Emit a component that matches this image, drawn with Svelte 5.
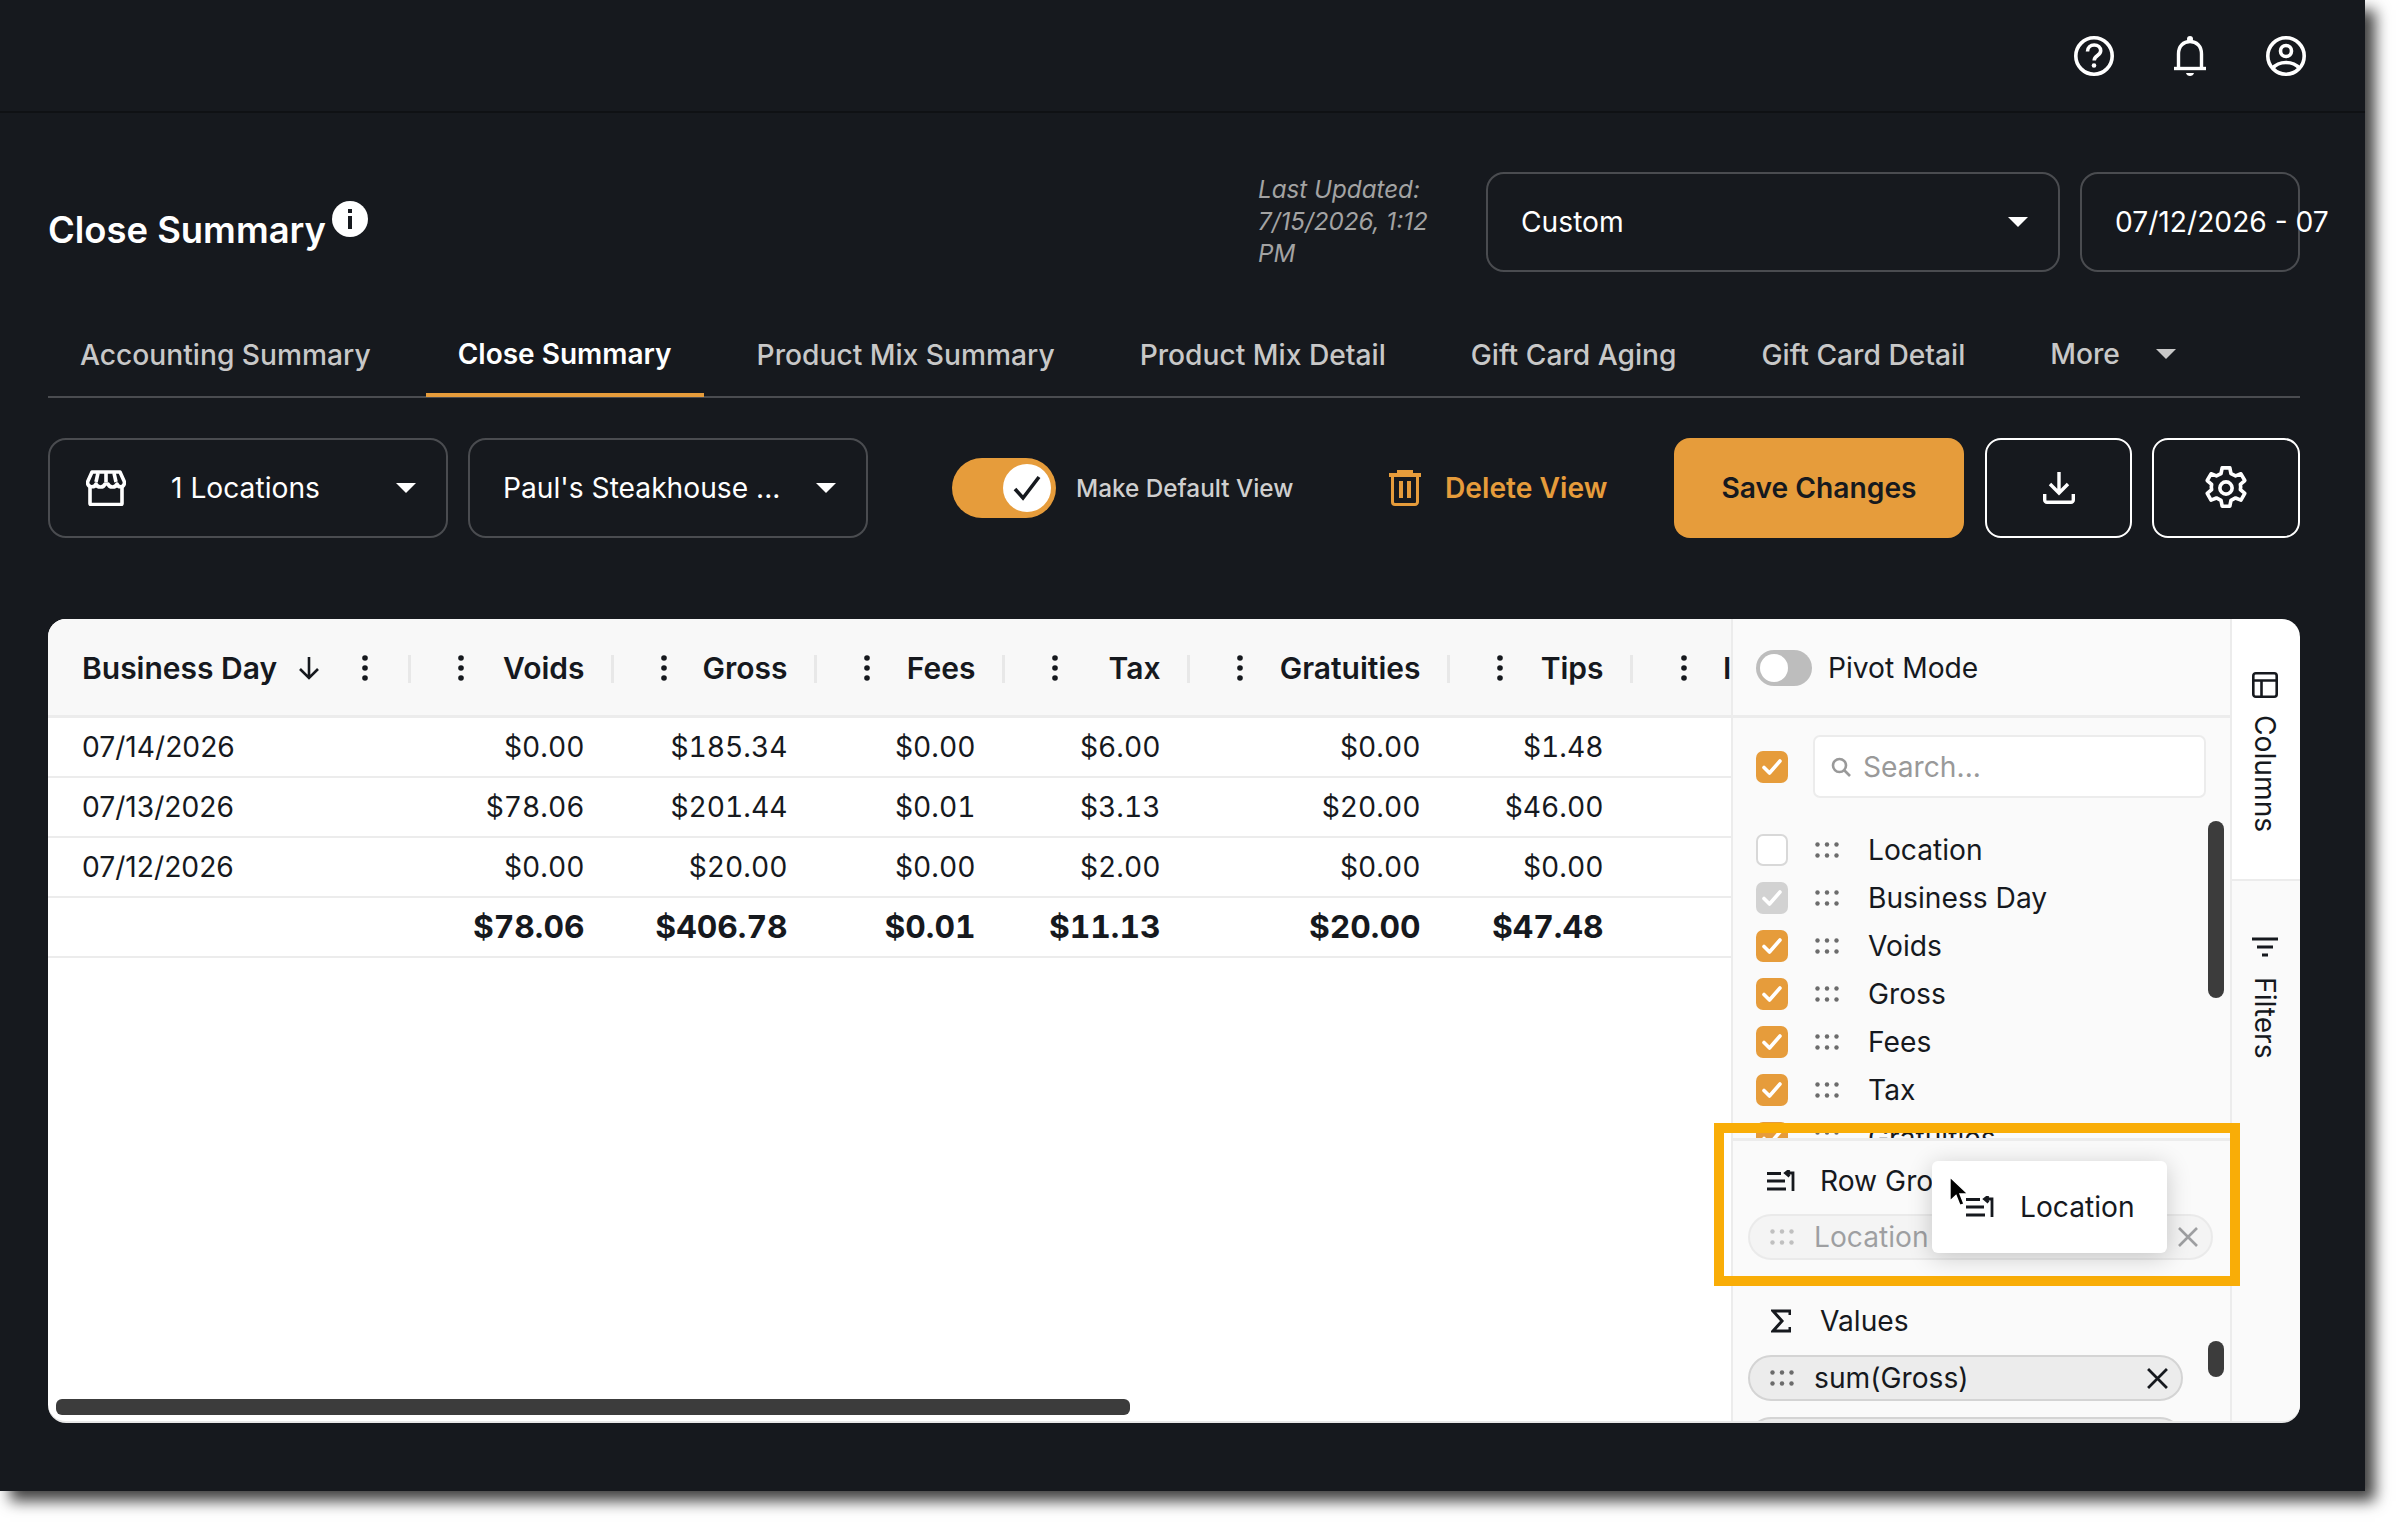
<script lang="ts">
	const tabs = [
		'Accounting Summary',
		'Close Summary',
		'Product Mix Summary',
		'Product Mix Detail',
		'Gift Card Aging',
		'Gift Card Detail'
	];

	const columns = [
		{ label: 'Voids', width: 203 },
		{ label: 'Gross', width: 203 },
		{ label: 'Fees', width: 188 },
		{ label: 'Tax', width: 185 },
		{ label: 'Gratuities', width: 260 },
		{ label: 'Tips', width: 183 }
	];

	const rows = [
		{ day: '07/14/2026', values: ['$0.00', '$185.34', '$0.00', '$6.00', '$0.00', '$1.48'] },
		{ day: '07/13/2026', values: ['$78.06', '$201.44', '$0.01', '$3.13', '$20.00', '$46.00'] },
		{ day: '07/12/2026', values: ['$0.00', '$20.00', '$0.00', '$2.00', '$0.00', '$0.00'] }
	];
	const totals = ['$78.06', '$406.78', '$0.01', '$11.13', '$20.00', '$47.48'];

	const columnList = [
		{ label: 'Location', state: 'off' },
		{ label: 'Business Day', state: 'locked' },
		{ label: 'Voids', state: 'on' },
		{ label: 'Gross', state: 'on' },
		{ label: 'Fees', state: 'on' },
		{ label: 'Tax', state: 'on' },
		{ label: 'Gratuities', state: 'on' }
	];
</script>

{#snippet caret()}
	<svg class="caret" width="20" height="10" viewBox="0 0 20 10"><path d="M0 0h20L10 10z" fill="currentColor" /></svg>
{/snippet}

{#snippet dots()}
	<svg class="col-menu" width="6" height="26" viewBox="0 0 6 26" fill="currentColor">
		<circle cx="3" cy="3" r="2.8" /><circle cx="3" cy="13" r="2.8" /><circle cx="3" cy="23" r="2.8" />
	</svg>
{/snippet}

{#snippet grip()}
	<svg class="grip" width="24" height="16" viewBox="0 0 24 16" fill="currentColor">
		<circle cx="2.5" cy="2.5" r="2.2" /><circle cx="12" cy="2.5" r="2.2" /><circle cx="21.5" cy="2.5" r="2.2" />
		<circle cx="2.5" cy="13.5" r="2.2" /><circle cx="12" cy="13.5" r="2.2" /><circle cx="21.5" cy="13.5" r="2.2" />
	</svg>
{/snippet}

{#snippet check(color)}
	<svg width="20" height="16" viewBox="0 0 20 16" fill="none" stroke={color} stroke-width="3.6" stroke-linecap="round" stroke-linejoin="round">
		<path d="M2 8.5l5.500 5.500L18 2" />
	</svg>
{/snippet}

{#snippet groupIcon()}
	<svg width="28" height="22" viewBox="0 0 28 22" fill="none" stroke="currentColor" stroke-width="2.8">
		<path d="M0 3.500h14M0 11h18M0 19h19" />
		<path d="M26 21V3H19M22.500 0l-4 3 4 3.400" />
	</svg>
{/snippet}

{#snippet close(size)}
	<svg width={size} height={size} viewBox="0 0 20 20" fill="none" stroke="currentColor" stroke-width="2.6"><path d="M1 1l18 18M19 1L1 19" /></svg>
{/snippet}

<div class="page">
	<div class="screen">
		<header class="topbar">
			<svg width="40" height="40" viewBox="0 0 40 40" fill="none" stroke="currentColor" stroke-width="3.6">
				<circle cx="20" cy="20" r="18.200" />
				<path d="M13.500 15.500c0-4 3-6.500 6.700-6.500s6.500 2.500 6.500 5.800c0 4.700-6.500 4.800-6.500 9.700" />
				<circle cx="20" cy="29.500" r="2.300" fill="currentColor" stroke="none" />
			</svg>
			<svg width="32" height="40" viewBox="0 0 32 40" fill="none" stroke="currentColor" stroke-width="3.4">
				<path d="M4.500 32V18C4.500 10 9.500 5.500 16 5.500S27.500 10 27.500 18V32" />
				<path d="M0 32.500h32" />
				<circle cx="16" cy="3" r="3" fill="currentColor" stroke="none" />
				<path d="M12 37h8c-.5 2-2 3-4 3s-3.500-1-4-3z" fill="currentColor" stroke="none" />
			</svg>
			<svg width="40" height="40" viewBox="0 0 40 40" fill="none" stroke="currentColor" stroke-width="3.6">
				<circle cx="20" cy="20" r="18.200" />
				<circle cx="20" cy="15" r="5.500" />
				<path d="M6.500 32.500C10 28 15 26.500 20 26.500s10 1.500 13.500 6" />
			</svg>
		</header>

		<main class="content">
			<section class="title-row">
				<div class="title">
					<h1>Close Summary</h1>
					<svg class="info" width="36" height="36" viewBox="0 0 36 36">
						<circle cx="18" cy="18" r="18" fill="#fff" />
						<rect x="16" y="8" width="4" height="4" fill="#16191e" />
						<rect x="16" y="15" width="4" height="13" fill="#16191e" />
					</svg>
				</div>
				<p class="updated">Last Updated:<br />7/15/2026, 1:12<br />PM</p>
				<div class="select range">
					<span>Custom</span>
					{@render caret()}
				</div>
				<div class="select dates"><span>07/12/2026 - 07</span></div>
			</section>

			<nav class="tabs">
				{#each tabs as tab, i}
					<div class="tab" class:active={i === 1}>{tab}</div>
				{/each}
				<div class="tab more">More {@render caret()}</div>
			</nav>

			<section class="toolbar">
				<div class="select loc">
					<svg class="store" width="40" height="36" viewBox="0 0 40 36" fill="none" stroke="currentColor" stroke-width="3.6" stroke-linejoin="round">
						<path d="M4 17v16.500a1 1 0 0 0 1 1h30a1 1 0 0 0 1-1V17" />
						<path d="M6 2h28l4.500 10c0 6-6 6-7.500 2 -1.500 4-7.500 4-9 0h-3c-1.500 4-7.500 4-9 0-1.500 4-8.500 4-8.500-2z" />
						<path d="M12 3l-2 9M20 3v9M28 3l2 9" />
					</svg>
					<span class="grow">1 Locations</span>
					{@render caret()}
				</div>
				<div class="select name">
					<span class="grow">Paul's Steakhouse ...</span>
					{@render caret()}
				</div>
				<div class="toggle-on">
					<span class="thumb">
						<svg width="30" height="26" viewBox="0 0 30 26" fill="none" stroke="#16191e" stroke-width="3.6"><path d="M3 14l8 9L27 2" /></svg>
					</span>
				</div>
				<span class="default-label">Make Default View</span>
				<button class="delete">
					<svg width="32" height="36" viewBox="0 0 32 36" fill="none" stroke="currentColor" stroke-width="3">
						<path d="M0 5h32M10 3.500V1.500h12v2" stroke-width="4" />
						<path d="M3.500 6v26a2.500 2.500 0 0 0 2.500 2.500h20a2.500 2.500 0 0 0 2.500-2.500V6" />
						<path d="M12 11v17M20 11v17" stroke-width="4" />
					</svg>
					Delete View
				</button>
				<button class="save">Save Changes</button>
				<button class="icon-btn" aria-label="Download">
					<svg width="32" height="32" viewBox="0 0 32 32" fill="none" stroke="currentColor" stroke-width="3.4">
						<path d="M16 0v20M7 12l9 9 9-9" />
						<path d="M1.700 22v6a2.300 2.300 0 0 0 2.300 2.300h24a2.300 2.300 0 0 0 2.300-2.300v-6" />
					</svg>
				</button>
				<button class="icon-btn gear" aria-label="Settings">
					<svg width="46" height="46" viewBox="0 0 24 24" fill="none" stroke="currentColor" stroke-width="1.9" stroke-linejoin="round">
						<circle cx="12" cy="12" r="3.200" />
						<path d="M10 1.500h4l.6 3 2.400 1.200 2.800-1.100 2 3.500-2.300 2c.2.900.2 1.800 0 2.700l2.300 2-2 3.500-2.800-1.100-2.400 1.300-.6 3h-4l-.6-3L7 17.200l-2.800 1.100-2-3.500 2.300-2c-.2-.9-.2-1.800 0-2.700l-2.300-2 2-3.500L7 5.700l2.400-1.200z" />
					</svg>
				</button>
			</section>

			<section class="grid-card">
				<div class="table">
					<div class="thead">
						<div class="cell first head">
							<span>Business Day</span>
							<svg class="sort" width="22" height="24" viewBox="0 0 22 24" fill="none" stroke="currentColor" stroke-width="2.6"><path d="M11 1v21M2 13l9 9 9-9" /></svg>
							{@render dots()}
							<i class="sep"></i>
						</div>
						{#each columns as col}
							<div class="cell head" style="width: {col.width}px">
								{@render dots()}
								<span class="right">{col.label}</span>
								<i class="sep"></i>
							</div>
						{/each}
						<div class="cell head tail">
							{@render dots()}
							<span class="cut">I</span>
						</div>
					</div>
					{#each rows as row}
						<div class="row">
							<div class="cell first">{row.day}</div>
							{#each row.values as value, i}
								<div class="cell num" style="width: {columns[i].width}px">{value}</div>
							{/each}
						</div>
					{/each}
					<div class="row total">
						<div class="cell first"></div>
						{#each totals as value, i}
							<div class="cell num" style="width: {columns[i].width}px">{value}</div>
						{/each}
					</div>
					<div class="hscroll"></div>
				</div>

				<aside class="panel">
					<div class="pivot">
						<span class="toggle-off"><span></span></span>
						Pivot Mode
					</div>
					<div class="columns-box">
						<div class="search-row">
							<span class="box on">{@render check('#fff')}</span>
							<div class="search">
								<svg width="20" height="20" viewBox="0 0 20 20" fill="none" stroke="currentColor" stroke-width="2.6"><circle cx="8.500" cy="8.500" r="6.500" /><path d="M13.500 13.500l5.500 5.500" /></svg>
								Search...
							</div>
						</div>
						<ul class="col-list">
							{#each columnList as col}
								<li>
									<span class="box {col.state}">
										{#if col.state !== 'off'}{@render check('#fff')}{/if}
									</span>
									{@render grip()}
									<span class="col-name">{col.label}</span>
								</li>
							{/each}
						</ul>
						<div class="vscroll"></div>
					</div>
					<div class="drop-zones">
						<div class="zone-title">{@render groupIcon()}<span>Row Groups</span></div>
						<div class="chip faded">
							{@render grip()}
							<span class="grow">Location</span>
							{@render close(20)}
						</div>
						<div class="zone-title values">
							<svg width="20" height="24" viewBox="0 0 20 24" fill="none" stroke="currentColor" stroke-width="3"><path d="M19 6V2H2l9 10-9 10h17v-4" /></svg>
							<span>Values</span>
						</div>
						<div class="chip short">
							{@render grip()}
							<span class="grow">sum(Gross)</span>
							{@render close(21)}
						</div>
						<div class="chip short next"></div>
						<div class="vscroll small"></div>
					</div>
					<div class="highlight"></div>
					<div class="ghost">
						{@render groupIcon()}
						<span>Location</span>
					</div>
					<svg class="cursor" width="20" height="32" viewBox="0 0 20 32">
						<path d="M1 1v24l6-5.500 4 10 4-1.600-4-9.900h8z" fill="#000" stroke="#fff" stroke-width="1.4" />
					</svg>
				</aside>

				<div class="side-tabs">
					<div class="side-tab columns-tab">
						<svg width="26" height="26" viewBox="0 0 26 26" fill="none" stroke="currentColor" stroke-width="2.6">
							<rect x="1.300" y="1.300" width="23.400" height="23.400" rx="2.500" />
							<path d="M1 8.500h24M9.500 8.500V25" />
						</svg>
						<span>Columns</span>
					</div>
					<div class="side-tab filters-tab">
						<svg width="26" height="20" viewBox="0 0 26 20" fill="none" stroke="currentColor" stroke-width="2.8">
							<path d="M0 2h26M5 10h16M10 18h6" />
						</svg>
						<span>Filters</span>
					</div>
				</div>
			</section>
		</main>
	</div>
</div>

<style>
	:global(body) {
		background: #fff;
	}

	.page {
		width: 2396px;
		height: 1522px;
		overflow: hidden;
	}

	.screen {
		width: 2365px;
		height: 1491px;
		background: #16191e;
		color: #fff;
		font-family: Inter, 'Liberation Sans', sans-serif;
		font-size: 28.2px;
		box-shadow: 10px 10px 14px rgba(0, 0, 0, 0.75);
		display: flex;
		flex-direction: column;
	}

	.topbar {
		height: 113px;
		box-sizing: border-box;
		border-bottom: 2px solid #0f1114;
		padding: 36px 59px 0 0;
		display: flex;
		justify-content: flex-end;
		align-items: flex-start;
		gap: 60px;
	}

	.content {
		flex: 1;
		padding: 59px 65px 0 48px;
		display: flex;
		flex-direction: column;
		min-height: 0;
	}

	.title-row {
		display: flex;
		align-items: center;
		height: 100px;
	}

	.title {
		display: flex;
		width: 1210px;
		align-items: flex-start;
		padding-top: 8px;
		box-sizing: border-box;
	}

	h1 {
		margin: 7px 6px 0 0;
		font-size: 36.4px;
		line-height: 44px;
		font-weight: 600;
	}

	.info {
		margin-top: 0;
	}

	.updated {
		width: 228px;
		margin: 0;
		font-size: 24.2px;
		line-height: 32px;
		font-style: italic;
		color: #a3a3a3;
	}

	.select {
		height: 100px;
		box-sizing: border-box;
		border: 2px solid #4a4c50;
		border-radius: 18px;
		display: flex;
		align-items: center;
		flex: none;
	}

	.grow {
		flex: 1;
	}

	.range {
		width: 574px;
		padding: 0 30px 0 33px;
		justify-content: space-between;
	}

	.dates {
		width: 220px;
		margin-left: 20px;
		padding-left: 33px;
		white-space: nowrap;
	}

	.caret {
		flex: none;
	}

	.tabs {
		margin-top: 49px;
		height: 75px;
		border-bottom: 2px solid #4a4c50;
		display: flex;
		align-items: stretch;
		color: #c8c8c8;
		font-weight: 500;
	}

	.tab {
		padding: 0 32px;
		line-height: 68px;
		margin-right: 21px;
		margin-bottom: -1px;
		border-bottom: 4px solid transparent;
		white-space: nowrap;
	}

	.tab:first-child {
		margin-right: 23px;
	}

	.tab.active {
		color: #fff;
		font-weight: 600;
		font-size: 28px;
		border-bottom-color: #e69c3b;
		line-height: 66px;
	}

	.more {
		display: flex;
		gap: 36px;
		align-items: center;
		padding-bottom: 6px;
		box-sizing: border-box;
	}

	.toolbar {
		margin-top: 40px;
		height: 100px;
		display: flex;
		align-items: center;
	}

	.loc {
		width: 400px;
		padding: 0 30px 0 36px;
		gap: 45px;
	}

	.name {
		width: 400px;
		margin-left: 20px;
		padding: 0 30px 0 33px;
	}

	.toggle-on {
		width: 104px;
		height: 60px;
		margin-left: 84px;
		border-radius: 30px;
		background: #e69c3b;
		display: flex;
		justify-content: flex-end;
		align-items: center;
		padding-right: 5px;
		box-sizing: border-box;
		flex: none;
	}

	.thumb {
		width: 48px;
		height: 48px;
		border-radius: 50%;
		background: #fff;
		display: flex;
		align-items: center;
		justify-content: center;
	}

	.default-label {
		margin-left: 20px;
		width: 313px;
		font-size: 24.3px;
		font-weight: 500;
		color: #cfcfcf;
		flex: none;
	}

	button {
		font: inherit;
		color: inherit;
		background: none;
		border: 0;
		padding: 0;
		flex: none;
	}

	.delete {
		display: flex;
		align-items: center;
		gap: 24px;
		width: 285px;
		color: #e69c3b;
		font-weight: 600;
	}

	.save {
		width: 290px;
		height: 100px;
		background: #e69c3b;
		color: #16191e;
		font-weight: 600;
		border-radius: 16px;
	}

	.icon-btn {
		width: 147px;
		height: 100px;
		margin-left: 21px;
		box-sizing: border-box;
		border: 2px solid #fff;
		border-radius: 16px;
		display: flex;
		align-items: center;
		justify-content: center;
	}

	.icon-btn.gear {
		width: 148px;
		margin-left: 20px;
	}

	.grid-card {
		margin-top: 81px;
		height: 804px;
		background: #fff;
		border-radius: 18px;
		border-bottom: 2px solid #e8e8e8;
		box-sizing: border-box;
		overflow: hidden;
		display: flex;
		color: #16191e;
	}

	.table {
		width: 1683px;
		flex: none;
		position: relative;
		overflow: hidden;
	}

	.thead,
	.row {
		display: flex;
		box-sizing: border-box;
		border-bottom: 2px solid #ececec;
	}

	.thead {
		height: 99px;
		background: #f8f8f8;
		border-bottom-width: 3px;
		font-size: 30px;
		font-weight: 600;
	}

	.row {
		height: 60px;
		align-items: center;
	}

	.total {
		font-weight: 700;
		font-size: 31.8px;
		padding-bottom: 2px;
	}

	.cell {
		flex: none;
		box-sizing: border-box;
		padding-right: 30.500px;
		white-space: nowrap;
	}

	.first {
		width: 364px;
		padding-left: 34px;
	}

	.num {
		text-align: right;
		font-variant-numeric: tabular-nums;
	}

	.head {
		position: relative;
		display: flex;
		align-items: center;
		height: 97px;
		padding-left: 46px;
	}

	.head.first {
		padding-left: 34px;
	}

	.right {
		margin-left: auto;
	}

	.sort {
		margin-left: 21px;
	}

	.first .col-menu {
		margin-left: 42px;
	}

	.col-menu {
		flex: none;
	}

	.sep {
		position: absolute;
		right: 1px;
		top: 36px;
		width: 3px;
		height: 28px;
		background: #e8e8e8;
	}

	.tail {
		width: 97px;
		padding-left: 47px;
		padding-right: 0;
	}

	.cut {
		margin-left: 36px;
	}

	.hscroll {
		position: absolute;
		left: 8px;
		top: 780px;
		width: 1074px;
		height: 16px;
		border-radius: 6px;
		background: #3c3c3c;
	}

	.panel {
		width: 501px;
		flex: none;
		box-sizing: border-box;
		position: relative;
		background: #fafafa;
		border-left: 2px solid #ececec;
		border-right: 2px solid #ececec;
	}

	.pivot {
		height: 99px;
		box-sizing: border-box;
		border-bottom: 3px solid #ececec;
		padding: 2px 0 0 23px;
		display: flex;
		align-items: center;
		gap: 16px;
	}

	.toggle-off {
		width: 56px;
		height: 36px;
		border-radius: 18px;
		background: #bdbdbd;
		display: flex;
		align-items: center;
		padding-left: 4px;
		box-sizing: border-box;
	}

	.toggle-off span {
		width: 28px;
		height: 28px;
		border-radius: 50%;
		background: #fff;
	}

	.columns-box {
		height: 420px;
		position: relative;
		overflow: hidden;
	}

	.search-row {
		display: flex;
		align-items: center;
		gap: 25px;
		padding: 17px 24px 0 23px;
	}

	.box {
		width: 32px;
		height: 32px;
		border-radius: 7px;
		display: flex;
		align-items: center;
		justify-content: center;
		box-sizing: border-box;
		flex: none;
	}

	.box.on {
		background: #e69c3b;
	}

	.box.locked {
		background: #d2d2d2;
	}

	.box.off {
		background: #fff;
		border: 2px solid #d8d8d8;
	}

	.search {
		flex: 1;
		height: 63px;
		box-sizing: border-box;
		border: 2px solid #ececec;
		border-radius: 7px;
		background: #fff;
		display: flex;
		align-items: center;
		gap: 12px;
		padding-left: 16px;
		color: #999;
	}

	.col-list {
		list-style: none;
		margin: 28px 0 0;
		padding: 0 0 0 23px;
	}

	.col-list li {
		height: 48px;
		display: flex;
		align-items: center;
	}

	.grip {
		color: #6b6b6b;
		flex: none;
		margin-left: 27px;
	}

	.col-name {
		margin-left: 29px;
	}

	.vscroll {
		position: absolute;
		left: 475px;
		top: 103px;
		width: 16px;
		height: 177px;
		border-radius: 8px;
		background: #3c3c3c;
	}

	.vscroll.small {
		top: 200px;
		height: 36px;
	}

	.drop-zones {
		position: relative;
		border-top: 3px solid #ececec;
		padding: 28px 0 0 15px;
		height: 400px;
		box-sizing: border-box;
	}

	.zone-title {
		height: 24px;
		display: flex;
		align-items: center;
		gap: 25px;
		padding-left: 19px;
	}

	.values {
		margin-top: 49px;
		padding-left: 23px;
		gap: 29px;
	}

	.chip {
		box-sizing: border-box;
		width: 465px;
		height: 46px;
		border: 2px solid #d4d4d4;
		border-radius: 23px;
		background: #ececec;
		margin-top: 21px;
		display: flex;
		align-items: center;
		padding: 0 13px 0 0;
	}

	.chip .grip {
		margin: 0 20px 0 20px;
	}

	.chip.faded {
		opacity: 0.4;
	}

	.chip.short {
		width: 435px;
		margin-top: 22px;
	}

	.chip.next {
		margin-top: 16px;
	}

	.highlight {
		position: absolute;
		left: -19px;
		top: 504px;
		width: 526px;
		height: 163px;
		box-sizing: border-box;
		border: 10px solid #f9ad07;
		pointer-events: none;
	}

	.ghost {
		position: absolute;
		left: 199px;
		top: 542px;
		width: 235px;
		height: 92px;
		box-sizing: border-box;
		background: #fff;
		border-radius: 6px;
		box-shadow: 0 4px 24px rgba(0, 0, 0, 0.2);
		display: flex;
		align-items: center;
		gap: 26px;
		padding: 0 0 0 34px;
	}

	.cursor {
		position: absolute;
		left: 216px;
		top: 557px;
	}

	.side-tabs {
		flex: 1;
		min-width: 0;
		display: flex;
		flex-direction: column;
	}

	.side-tab {
		display: flex;
		flex-direction: column;
		align-items: center;
		box-sizing: border-box;
		padding-right: 2px;
	}

	.side-tab span {
		writing-mode: vertical-rl;
	}

	.columns-tab {
		height: 262px;
		border-bottom: 2px solid #ececec;
		padding-top: 53px;
		gap: 17px;
	}

	.filters-tab {
		flex: 1;
		background: #fafafa;
		padding-top: 56px;
		gap: 20px;
	}
</style>
